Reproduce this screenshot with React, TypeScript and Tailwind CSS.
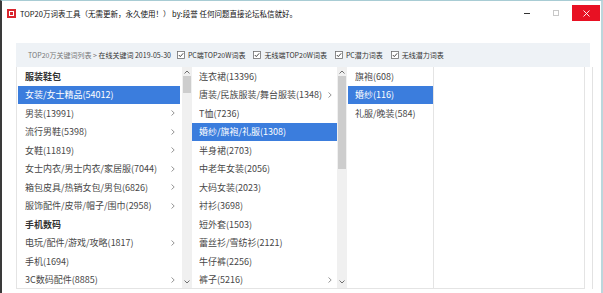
import React from "react";

// Keyword-table tool window: title bar, breadcrumb/checkbox header, three cascading category lists.

type Item = { t: string; head?: boolean; sel?: boolean; more?: boolean };

const col1: Item[] = [
  { t: "服装鞋包", head: true },
  { t: "女装/女士精品(54012)", sel: true },
  { t: "男装(13991)", more: true },
  { t: "流行男鞋(5398)", more: true },
  { t: "女鞋(11819)", more: true },
  { t: "女士内衣/男士内衣/家居服(7044)", more: true },
  { t: "箱包皮具/热销女包/男包(6826)", more: true },
  { t: "服饰配件/皮带/帽子/围巾(2958)", more: true },
  { t: "手机数码", head: true },
  { t: "电玩/配件/游戏/攻略(1817)", more: true },
  { t: "手机(1694)" },
  { t: "3C数码配件(8885)", more: true },
];

const col2: Item[] = [
  { t: "连衣裙(13396)" },
  { t: "唐装/民族服装/舞台服装(1348)", more: true },
  { t: "T恤(7236)" },
  { t: "婚纱/旗袍/礼服(1308)", sel: true },
  { t: "半身裙(2703)" },
  { t: "中老年女装(2056)" },
  { t: "大码女装(2023)" },
  { t: "衬衫(3698)" },
  { t: "短外套(1503)" },
  { t: "蕾丝衫/雪纺衫(2121)" },
  { t: "牛仔裤(2256)" },
  { t: "裤子(5216)", more: true },
];

const col3: Item[] = [
  { t: "旗袍(608)" },
  { t: "婚纱(116)", sel: true },
  { t: "礼服/晚装(584)" },
];

function Chevron() {
  return (
    <svg width="4" height="6" viewBox="0 0 4 6" className="shrink-0">
      <polyline points="0.5,0.5 3.2,3 0.5,5.5" fill="none" stroke="#8a8a8a" strokeWidth="0.9" />
    </svg>
  );
}

function Arrow({ up }: { up?: boolean }) {
  return (
    <svg width="6" height="4" viewBox="0 0 6 4">
      <polyline
        points={up ? "0.5,3.5 3,1 5.5,3.5" : "0.5,0.5 3,3 5.5,0.5"}
        fill="none"
        stroke="#606060"
        strokeWidth="0.9"
      />
    </svg>
  );
}

function Check() {
  return (
    <svg width="8" height="8" viewBox="0 0 8 8" className="mr-[3px] shrink-0">
      <rect x="0.5" y="0.5" width="7" height="7" fill="#fff" stroke="#6f6f6f" strokeWidth="0.8" />
      <polyline points="1.8,4 3.3,5.6 6.2,2.3" fill="none" stroke="#333" strokeWidth="0.9" />
    </svg>
  );
}

function Row({ it }: { it: Item }) {
  return (
    <div
      className={
        "flex h-[18.5px] items-center pl-[7px] pr-[5px] text-[9px] " +
        (it.sel ? "bg-[#3b7ddd] text-white" : it.head ? "font-bold text-[#333]" : "text-[#474747]")
      }
    >
      <span className="flex-1 truncate">{it.t}</span>
      {it.more && !it.sel && <Chevron />}
    </div>
  );
}

function ScrollBar({ thumbTop, thumbH }: { thumbTop: number; thumbH: number }) {
  return (
    <div className="relative flex w-[10px] shrink-0 flex-col items-center bg-[#f0f0f0]">
      <div className="flex h-[9px] items-center">
        <Arrow up />
      </div>
      <div className="absolute left-[1px] w-[8px] bg-[#cdcdcd]" style={{ top: thumbTop, height: thumbH }} />
      <div className="mt-auto flex h-[12px] items-center">
        <Arrow />
      </div>
    </div>
  );
}

export default function App() {
  return (
    <div className="relative h-[293px] w-[603px] overflow-hidden border-l-2 border-r-2 border-t border-l-[#3a3a3a] border-r-[#bcd6dc] border-t-[#a8ccd4] bg-white font-['Noto_Sans_CJK_SC','Microsoft_YaHei',sans-serif]">
      {/* title bar */}
      <div className="flex h-[26px] items-start">
        <div className="ml-[5px] mt-[8px] flex h-[9px] w-[9px] items-center justify-center bg-[#d9262e]">
          <div className="h-[5px] w-[5px] border border-white" />
        </div>
        <div className="ml-[4px] mt-[7px] text-[7.5px] leading-[11px] text-[#111]">
          TOP20万词表工具（无需更新，永久使用！） by:段誉 任何问题直接论坛私信就好。
        </div>
        <div className="ml-auto mt-[12px] h-[1px] w-[6px] bg-[#333]" />
        <div className="ml-[23px] mt-[9px] h-[6px] w-[6px] border border-[#c8c8c8]" />
        <div className="ml-[13px] mr-[1px] mt-[4px] flex h-[16px] w-[28px] items-center justify-center bg-[#e81123]">
          <svg width="7" height="7" viewBox="0 0 7 7">
            <path d="M0.5 0.5 L6.5 6.5 M6.5 0.5 L0.5 6.5" stroke="#fff" strokeWidth="0.9" />
          </svg>
        </div>
      </div>

      {/* panel */}
      <div className="ml-[14px] mt-[16px] flex w-[578px] flex-col">
        <div className="flex h-[24px] w-[574px] items-center bg-[#eef2f6] pl-[12px] text-[7px]">
          <span className="text-[#777]">TOP20万关键词列表 &gt;&nbsp;</span>
          <span className="text-[#333]">在线关键词 2019-05-30</span>
          <div className="ml-[6px] flex items-center gap-[8px] text-[#333]">
            <span className="flex items-center">
              <Check />
              PC端TOP20W词表
            </span>
            <span className="flex items-center">
              <Check />
              无线端TOP20W词表
            </span>
            <span className="flex items-center">
              <Check />
              PC潜力词表
            </span>
            <span className="flex items-center">
              <Check />
              无线潜力词表
            </span>
          </div>
        </div>

        <div className="flex h-[222px] border-l border-[#e4e4e4]">
          <div className="flex border-b border-[#e4e4e4]">
            <div className="w-[165px] shrink-0 pl-[1px] pr-[2px]">
              {col1.map((it, i) => (
                <Row key={i} it={it} />
              ))}
            </div>
            <ScrollBar thumbTop={9} thumbH={17} />
            <div className="w-[145px] shrink-0">
              {col2.map((it, i) => (
                <Row key={i} it={it} />
              ))}
            </div>
            <ScrollBar thumbTop={9} thumbH={93} />
            <div className="w-[86px] shrink-0 pl-[1px]">
              {col3.map((it, i) => (
                <Row key={i} it={it} />
              ))}
            </div>
            <div className="w-[152px] shrink-0 border-l border-r border-[#e4e4e4]" />
          </div>
          <div className="w-[8px] shrink-0 border-r border-[#e2e2e2]" />
        </div>
      </div>
    </div>
  );
}
